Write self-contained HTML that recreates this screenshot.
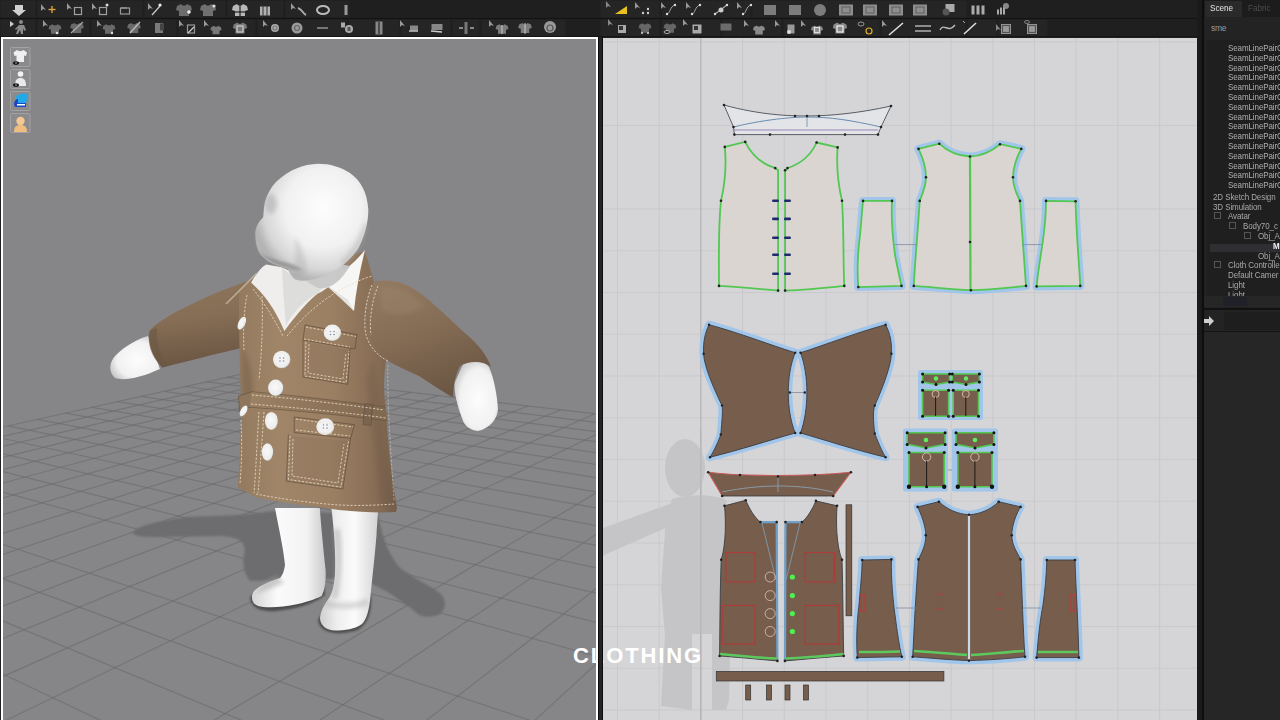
<!DOCTYPE html>
<html><head><meta charset="utf-8">
<style>
*{margin:0;padding:0;box-sizing:border-box}
html,body{width:1280px;height:720px;overflow:hidden;background:#1f1f1f;font-family:"Liberation Sans",sans-serif}
.abs{position:absolute}
#tb{left:0;top:0;width:1202px;height:37px;background:#1f1f1f}
#v3{left:1px;top:37px;width:597px;height:683px;background:#fff}
#v3in{left:2px;top:2px;width:593px;height:681px;background:#868688;overflow:hidden}
#div{left:598px;top:37px;width:5px;height:683px;background:#252525;border-left:1px solid #0c0c0c;border-right:1px solid #0c0c0c}
#v2{left:603px;top:38px;width:594px;height:682px;background:#d5d5d7;overflow:hidden}
#rp{left:1197px;top:0;width:83px;height:720px;background:#1b1b1b}
.tr{font-size:9.5px;line-height:11px;color:#b0b0b0;white-space:nowrap;letter-spacing:-0.1px;transform:scaleX(0.84);transform-origin:0 0}
#rp{overflow:hidden}

</style></head><body>
<div id="tb" class="abs"><svg width="1202" height="37" style="position:absolute;left:0;top:0"><rect x="0.5" y="0.5" width="35" height="17" fill="#252525"/><rect x="37.5" y="0.5" width="105" height="17" fill="#252525"/><rect x="144.5" y="0.5" width="81" height="17" fill="#252525"/><rect x="227.5" y="0.5" width="56" height="17" fill="#252525"/><rect x="285.5" y="0.5" width="64" height="17" fill="#252525"/><rect x="600.5" y="0.5" width="59" height="17" fill="#252525"/><rect x="661.5" y="0.5" width="89" height="17" fill="#252525"/><rect x="752.5" y="0.5" width="214" height="17" fill="#252525"/><rect x="0.5" y="19.5" width="35" height="17" fill="#252525"/><rect x="37.5" y="19.5" width="52" height="17" fill="#252525"/><rect x="91.5" y="19.5" width="85" height="17" fill="#252525"/><rect x="178.5" y="19.5" width="77" height="17" fill="#252525"/><rect x="257.5" y="19.5" width="89" height="17" fill="#252525"/><rect x="348.5" y="19.5" width="51" height="17" fill="#252525"/><rect x="401.5" y="19.5" width="49" height="17" fill="#252525"/><rect x="452.5" y="19.5" width="27" height="17" fill="#252525"/><rect x="481.5" y="19.5" width="84" height="17" fill="#252525"/><rect x="600.5" y="19.5" width="59" height="17" fill="#252525"/><rect x="661.5" y="19.5" width="59" height="17" fill="#252525"/><rect x="722.5" y="19.5" width="59" height="17" fill="#252525"/><rect x="783.5" y="19.5" width="59" height="17" fill="#252525"/><rect x="844.5" y="19.5" width="35" height="17" fill="#252525"/><rect x="881.5" y="19.5" width="84" height="17" fill="#252525"/><rect x="967.5" y="19.5" width="29" height="17" fill="#252525"/><rect x="998.5" y="19.5" width="49" height="17" fill="#252525"/><rect x="0" y="18" width="1202" height="1" fill="#131313"/><rect x="0" y="36" width="1202" height="1" fill="#151515"/><path d="M15,5 L23,5 L23,10 L26,10 L19,16 L12,10 L15,10 Z" fill="#d0d0d0"/><path d="M41,4 l0,7 l2,-2 l3,1 z" fill="#9a9a9a"/><line x1="52" y1="6" x2="52" y2="13" stroke="#e0a040" stroke-width="1.4"/><line x1="48.5" y1="9.5" x2="55.5" y2="9.5" stroke="#e0a040" stroke-width="1.4"/><path d="M67,3 l0,7 l2,-2 l3,1 z" fill="#9a9a9a"/><rect x="74.5" y="7.5" width="7" height="7" fill="none" stroke="#a0a0a0" stroke-width="1.2"/><path d="M92,3 l0,7 l2,-2 l3,1 z" fill="#9a9a9a"/><rect x="99.5" y="7.5" width="7" height="7" fill="none" stroke="#a0a0a0" stroke-width="1.2"/><circle cx="107" cy="5" r="1.5" fill="#ddd"/><rect x="120.5" y="8.0" width="9" height="6" fill="none" stroke="#999" stroke-width="1.2"/><line x1="121" y1="8" x2="127" y2="8" stroke="#999" stroke-width="1.2"/><path d="M148,3 l0,7 l2,-2 l3,1 z" fill="#9a9a9a"/><line x1="152" y1="15" x2="160" y2="6" stroke="#ccc" stroke-width="1.2"/><circle cx="160" cy="5" r="1.6" fill="#eee"/><path transform="translate(184,10) scale(1.0)" d="M-3,-6 L-7,-4 L-8,0 L-5,1 L-5,6 L5,6 L5,1 L8,0 L7,-4 L3,-6 C2,-4 -2,-4 -3,-6 Z" fill="#6c6c6c"/><circle cx="189" cy="12" r="1.8" fill="#eee"/><path transform="translate(208,10) scale(1.0)" d="M-3,-6 L-7,-4 L-8,0 L-5,1 L-5,6 L5,6 L5,1 L8,0 L7,-4 L3,-6 C2,-4 -2,-4 -3,-6 Z" fill="#707070"/><circle cx="214" cy="6" r="1.6" fill="#ddd"/><path transform="translate(240,10) scale(1.0)" d="M-3,-6 L-7,-4 L-8,0 L-5,1 L-5,6 L5,6 L5,1 L8,0 L7,-4 L3,-6 C2,-4 -2,-4 -3,-6 Z" fill="#b8b8b8"/><line x1="232" y1="12" x2="248" y2="12" stroke="#222" stroke-width="1.2"/><line x1="240" y1="5" x2="240" y2="16" stroke="#222" stroke-width="1.2"/><rect x="260.0" y="6.5" width="10" height="9" fill="#b0b0b0"/><line x1="263" y1="6" x2="263" y2="16" stroke="#333" stroke-width="1"/><line x1="267" y1="6" x2="267" y2="16" stroke="#333" stroke-width="1"/><path d="M291,3 l0,7 l2,-2 l3,1 z" fill="#9a9a9a"/><path d="M298,8 C303,10 302,13 306,15" stroke="#aaa" stroke-width="2" fill="none"/><ellipse cx="323" cy="10" rx="6" ry="4" fill="none" stroke="#bbb" stroke-width="2"/><rect x="344.5" y="5.0" width="3" height="10" fill="#999"/><path d="M615,14 L627,14 L627,6 Z" fill="#e8c020"/><path d="M606,1 l0,7 l2,-2 l3,1 z" fill="#888"/><path d="M635,2 l0,7 l2,-2 l3,1 z" fill="#9a9a9a"/><circle cx="643" cy="13" r="1.2" fill="#ccc"/><circle cx="648" cy="9" r="1.2" fill="#ccc"/><circle cx="648" cy="13" r="1.2" fill="#ccc"/><path d="M661,2 l0,7 l2,-2 l3,1 z" fill="#9a9a9a"/><path d="M667,14 C670,14 670,6 675,5" stroke="#aaa" stroke-width="1" fill="none"/><circle cx="667" cy="14" r="1.2" fill="#ddd"/><circle cx="675" cy="5" r="1.2" fill="#ddd"/><path d="M686,2 l0,7 l2,-2 l3,1 z" fill="#9a9a9a"/><path d="M692,14 C695,14 695,6 700,5" stroke="#aaa" stroke-width="1" fill="none"/><circle cx="692" cy="14" r="1.2" fill="#ddd"/><circle cx="700" cy="5" r="1.2" fill="#ddd"/><line x1="715" y1="14" x2="727" y2="5" stroke="#aaa" stroke-width="1.2"/><circle cx="721" cy="10" r="2.5" fill="#ccc"/><circle cx="715" cy="14" r="1.2" fill="#ddd"/><circle cx="727" cy="5" r="1.2" fill="#ddd"/><path d="M737,2 l0,7 l2,-2 l3,1 z" fill="#9a9a9a"/><path d="M743,14 C746,14 746,6 751,5" stroke="#aaa" stroke-width="1" fill="none"/><circle cx="743" cy="14" r="1.2" fill="#ddd"/><circle cx="751" cy="5" r="1.2" fill="#ddd"/><rect x="764.0" y="5.0" width="12" height="10" fill="#7c7c7c"/><rect x="789.0" y="5.0" width="12" height="10" fill="#7c7c7c"/><circle cx="820" cy="10" r="6" fill="#7c7c7c"/><rect x="839.0" y="4.5" width="14" height="11" fill="#8e8e8e"/><rect x="842.0" y="7.0" width="8" height="6" fill="none" stroke="#666" stroke-width="1.2"/><rect x="863.0" y="4.5" width="14" height="11" fill="#8e8e8e"/><rect x="866.0" y="7.0" width="8" height="6" fill="none" stroke="#666" stroke-width="1.2"/><rect x="889.0" y="4.5" width="14" height="11" fill="#8e8e8e"/><rect x="892.0" y="7.0" width="8" height="6" fill="none" stroke="#666" stroke-width="1.2"/><rect x="913.0" y="4.5" width="14" height="11" fill="#8e8e8e"/><rect x="916.0" y="7.0" width="8" height="6" fill="none" stroke="#666" stroke-width="1.2"/><rect x="945.5" y="4.0" width="9" height="8" fill="#aaa"/><circle cx="946" cy="12" r="3.5" fill="#555"/><rect x="971.5" y="5.5" width="3" height="9" fill="#aaa"/><rect x="976.5" y="5.5" width="3" height="9" fill="#aaa"/><rect x="981.5" y="5.5" width="3" height="9" fill="#aaa"/><rect x="997.0" y="9.5" width="2" height="5" fill="#aaa"/><rect x="1000.0" y="7.5" width="2" height="7" fill="#aaa"/><rect x="1003.0" y="5.5" width="2" height="9" fill="#aaa"/><circle cx="1006" cy="6" r="3" fill="#888"/><path d="M10,21 l0,6 l4,-3 z" fill="#ccc"/><circle cx="21" cy="22" r="2" fill="#8a8a8a"/><path d="M19,25 L24,25 L26,30 L24,31 L23,28 L23,34 L21,34 L20,30 L18,34 L16,34 L18,28 L16,30 L15,29 Z" fill="#8a8a8a"/><path d="M43,20 l0,7 l2,-2 l3,1 z" fill="#9a9a9a"/><path transform="translate(55,29) scale(0.8)" d="M-3,-6 L-7,-4 L-8,0 L-5,1 L-5,6 L5,6 L5,1 L8,0 L7,-4 L3,-6 C2,-4 -2,-4 -3,-6 Z" fill="#6a6a6a"/><circle cx="57" cy="33" r="1.2" fill="#ddd"/><path transform="translate(77,28) scale(0.85)" d="M-3,-6 L-7,-4 L-8,0 L-5,1 L-5,6 L5,6 L5,1 L8,0 L7,-4 L3,-6 C2,-4 -2,-4 -3,-6 Z" fill="#6a6a6a"/><line x1="71" y1="33" x2="83" y2="22" stroke="#aaa" stroke-width="1.2"/><path d="M97,20 l0,7 l2,-2 l3,1 z" fill="#9a9a9a"/><path transform="translate(109,29) scale(0.8)" d="M-3,-6 L-7,-4 L-8,0 L-5,1 L-5,6 L5,6 L5,1 L8,0 L7,-4 L3,-6 C2,-4 -2,-4 -3,-6 Z" fill="#6a6a6a"/><circle cx="112" cy="33" r="1.2" fill="#ddd"/><path transform="translate(134,28) scale(0.85)" d="M-3,-6 L-7,-4 L-8,0 L-5,1 L-5,6 L5,6 L5,1 L8,0 L7,-4 L3,-6 C2,-4 -2,-4 -3,-6 Z" fill="#6a6a6a"/><line x1="130" y1="33" x2="140" y2="22" stroke="#bbb" stroke-width="1.4"/><rect x="155.0" y="23.0" width="8" height="10" fill="#7a7a7a"/><rect x="160.0" y="23.5" width="4" height="7" fill="#444"/><path d="M179,20 l0,7 l2,-2 l3,1 z" fill="#9a9a9a"/><rect x="187.5" y="25.0" width="7" height="8" fill="none" stroke="#999" stroke-width="1.2"/><line x1="188" y1="33" x2="194" y2="27" stroke="#ccc" stroke-width="1.2"/><path d="M204,20 l0,7 l2,-2 l3,1 z" fill="#9a9a9a"/><path transform="translate(216,30) scale(0.7)" d="M-3,-6 L-7,-4 L-8,0 L-5,1 L-5,6 L5,6 L5,1 L8,0 L7,-4 L3,-6 C2,-4 -2,-4 -3,-6 Z" fill="#777"/><path transform="translate(240,28) scale(0.9)" d="M-3,-6 L-7,-4 L-8,0 L-5,1 L-5,6 L5,6 L5,1 L8,0 L7,-4 L3,-6 C2,-4 -2,-4 -3,-6 Z" fill="#7a7a7a"/><rect x="237.0" y="26.0" width="6" height="6" fill="none" stroke="#ccc" stroke-width="1.2"/><path d="M263,20 l0,7 l2,-2 l3,1 z" fill="#9a9a9a"/><circle cx="275" cy="28" r="4" fill="#aaa"/><circle cx="275" cy="28" r="2" fill="none" stroke="#777" stroke-width="1.2"/><circle cx="297" cy="28" r="5.5" fill="#9a9a9a"/><circle cx="297" cy="28" r="2.5" fill="none" stroke="#666" stroke-width="1.2"/><line x1="317" y1="28" x2="328" y2="28" stroke="#999" stroke-width="1.4"/><rect x="341.0" y="22.5" width="4" height="5" fill="#aaa"/><circle cx="349" cy="29" r="4" fill="#aaa"/><rect x="347.5" y="27.0" width="3" height="4" fill="#555"/><rect x="375.5" y="21.5" width="7" height="13" fill="#888"/><line x1="379" y1="22" x2="379" y2="34" stroke="#222" stroke-width="1.2"/><path d="M400,20 l0,7 l2,-2 l3,1 z" fill="#9a9a9a"/><rect x="410.0" y="25.5" width="8" height="5" fill="#888"/><line x1="409" y1="31" x2="418" y2="31" stroke="#ccc" stroke-width="1.4"/><rect x="431.5" y="24.0" width="11" height="6" fill="#888"/><line x1="431" y1="31" x2="442" y2="32" stroke="#ccc" stroke-width="1.4"/><line x1="459" y1="28" x2="463" y2="28" stroke="#ccc" stroke-width="1.2"/><line x1="470" y1="28" x2="474" y2="28" stroke="#ccc" stroke-width="1.2"/><rect x="464.5" y="22.0" width="3" height="12" fill="#777"/><path d="M489,20 l0,7 l2,-2 l3,1 z" fill="#9a9a9a"/><path transform="translate(502,29) scale(0.8)" d="M-3,-6 L-7,-4 L-8,0 L-5,1 L-5,6 L5,6 L5,1 L8,0 L7,-4 L3,-6 C2,-4 -2,-4 -3,-6 Z" fill="#7c7c7c"/><line x1="502" y1="25" x2="502" y2="34" stroke="#ccc" stroke-width="1"/><path transform="translate(525,28) scale(0.85)" d="M-3,-6 L-7,-4 L-8,0 L-5,1 L-5,6 L5,6 L5,1 L8,0 L7,-4 L3,-6 C2,-4 -2,-4 -3,-6 Z" fill="#7c7c7c"/><line x1="525" y1="23" x2="525" y2="34" stroke="#ccc" stroke-width="1"/><circle cx="550" cy="27" r="6" fill="#9a9a9a"/><circle cx="550" cy="28" r="3" fill="none" stroke="#555" stroke-width="1.2"/><path d="M608,19 l0,7 l2,-2 l3,1 z" fill="#888"/><rect x="618.0" y="25.0" width="8" height="8" fill="#aaa"/><rect x="619.0" y="26.0" width="4" height="4" fill="#333"/><path transform="translate(645,28) scale(0.8)" d="M-3,-6 L-7,-4 L-8,0 L-5,1 L-5,6 L5,6 L5,1 L8,0 L7,-4 L3,-6 C2,-4 -2,-4 -3,-6 Z" fill="#666"/><circle cx="642" cy="33" r="1" fill="#ddd"/><circle cx="648" cy="33" r="1" fill="#ddd"/><path transform="translate(670,28) scale(0.8)" d="M-3,-6 L-7,-4 L-8,0 L-5,1 L-5,6 L5,6 L5,1 L8,0 L7,-4 L3,-6 C2,-4 -2,-4 -3,-6 Z" fill="#666"/><ellipse cx="667" cy="32" rx="3" ry="1.5" fill="#222" stroke="#ccc" stroke-width="0.8"/><path d="M683,19 l0,7 l2,-2 l3,1 z" fill="#999"/><rect x="692.5" y="24.5" width="9" height="9" fill="#aaa"/><rect x="694.0" y="26.0" width="4" height="4" fill="#333"/><rect x="720.5" y="23.5" width="11" height="7" fill="#6c6c6c"/><path d="M744,20 l0,7 l2,-2 l3,1 z" fill="#9a9a9a"/><path transform="translate(759,30) scale(0.75)" d="M-3,-6 L-7,-4 L-8,0 L-5,1 L-5,6 L5,6 L5,1 L8,0 L7,-4 L3,-6 C2,-4 -2,-4 -3,-6 Z" fill="#8a8a8a"/><path d="M775,20 l0,7 l2,-2 l3,1 z" fill="#9a9a9a"/><rect x="787.5" y="24.5" width="7" height="9" fill="#999"/><circle cx="789" cy="32" r="2" fill="#ddd"/><path d="M801,20 l0,7 l2,-2 l3,1 z" fill="#9a9a9a"/><path transform="translate(817,30) scale(0.75)" d="M-3,-6 L-7,-4 L-8,0 L-5,1 L-5,6 L5,6 L5,1 L8,0 L7,-4 L3,-6 C2,-4 -2,-4 -3,-6 Z" fill="#8a8a8a"/><rect x="814.5" y="27.5" width="5" height="5" fill="none" stroke="#ddd" stroke-width="1.2"/><path transform="translate(840,28) scale(0.9)" d="M-3,-6 L-7,-4 L-8,0 L-5,1 L-5,6 L5,6 L5,1 L8,0 L7,-4 L3,-6 C2,-4 -2,-4 -3,-6 Z" fill="#8a8a8a"/><rect x="837.0" y="26.0" width="6" height="6" fill="none" stroke="#eee" stroke-width="1.2"/><ellipse cx="861" cy="24" rx="3" ry="2" fill="none" stroke="#999" stroke-width="1"/><circle cx="869" cy="31" r="3" fill="none" stroke="#e0b020" stroke-width="1.2"/><path d="M882,20 l0,7 l2,-2 l3,1 z" fill="#9a9a9a"/><line x1="889" y1="35" x2="903" y2="23" stroke="#ddd" stroke-width="1.6"/><line x1="915" y1="26" x2="931" y2="26" stroke="#bbb" stroke-width="1.4"/><line x1="915" y1="31" x2="931" y2="31" stroke="#bbb" stroke-width="1.4"/><path d="M940,30 C944,22 948,34 955,25" stroke="#bbb" stroke-width="1.4" fill="none"/><path d="M963,21 l2,2" stroke="#aaa"/><line x1="964" y1="34" x2="976" y2="23" stroke="#ddd" stroke-width="1.6"/><path d="M996,24 l0,7 l2,-2 l3,1 z" fill="#888"/><rect x="1001.0" y="24.0" width="10" height="10" fill="#9a9a9a"/><rect x="1002.5" y="25.5" width="7" height="7" fill="none" stroke="#555" stroke-width="1.2"/><ellipse cx="1027" cy="22" rx="2.5" ry="1.5" fill="none" stroke="#999" stroke-width="0.8"/><rect x="1027.0" y="24.0" width="10" height="10" fill="#9a9a9a"/><rect x="1028.5" y="25.5" width="7" height="7" fill="none" stroke="#555" stroke-width="1.2"/></svg></div>
<div id="v3" class="abs"><div id="v3in" class="abs">
<svg width="593" height="681" viewBox="3 39 593 681" style="position:absolute;left:0;top:0">
<g stroke="#6a6a6c" stroke-width="1.2" stroke-opacity="0.62" fill="none"><line x1="-49.4" y1="438.6" x2="246.1" y2="373.2"/>
<line x1="-48.9" y1="448.2" x2="267.1" y2="375.6"/>
<line x1="-48.4" y1="458.6" x2="288.9" y2="378.1"/>
<line x1="-47.8" y1="470.1" x2="311.5" y2="380.8"/>
<line x1="-47.2" y1="482.6" x2="334.9" y2="383.5"/>
<line x1="-49.7" y1="497.3" x2="359.3" y2="386.3"/>
<line x1="-49.1" y1="512.8" x2="384.7" y2="389.3"/>
<line x1="-48.5" y1="530.0" x2="411.0" y2="392.4"/>
<line x1="-47.7" y1="549.3" x2="438.5" y2="395.6"/>
<line x1="-46.9" y1="571.1" x2="467.1" y2="398.9"/>
<line x1="-46.0" y1="595.9" x2="497.0" y2="402.4"/>
<line x1="-49.5" y1="626.2" x2="528.2" y2="406.0"/>
<line x1="-48.6" y1="659.6" x2="560.8" y2="409.8"/>
<line x1="-47.5" y1="698.9" x2="594.9" y2="413.8"/>
<line x1="-46.3" y1="745.7" x2="630.6" y2="417.9"/>
<line x1="-42.9" y1="873.0" x2="699.7" y2="431.4"/>
<line x1="-48.8" y1="968.2" x2="699.9" y2="464.5"/>
<line x1="67.1" y1="999.2" x2="698.8" y2="509.1"/>
<line x1="235.9" y1="994.8" x2="698.8" y2="569.8"/>
<line x1="399.5" y1="996.5" x2="698.8" y2="659.0"/>
<line x1="565.8" y1="998.2" x2="698.8" y2="803.2"/>
<line x1="-46.8" y1="928.9" x2="39.8" y2="997.7"/>
<line x1="-48.7" y1="802.3" x2="250.0" y2="996.7"/>
<line x1="-46.7" y1="715.7" x2="462.9" y2="995.6"/>
<line x1="-48.2" y1="649.8" x2="688.9" y2="999.4"/>
<line x1="-49.3" y1="599.2" x2="691.9" y2="908.0"/>
<line x1="-47.8" y1="559.9" x2="694.3" y2="835.1"/>
<line x1="-48.8" y1="527.2" x2="696.3" y2="775.7"/>
<line x1="-48.4" y1="477.8" x2="699.4" y2="684.6"/>
<line x1="-49.1" y1="458.3" x2="694.7" y2="647.4"/>
<line x1="-49.7" y1="441.5" x2="696.1" y2="616.7"/>
<line x1="-23.1" y1="432.8" x2="697.4" y2="589.9"/>
<line x1="8.0" y1="425.9" x2="698.5" y2="566.3"/>
<line x1="37.5" y1="419.3" x2="699.4" y2="545.3"/>
<line x1="65.4" y1="413.2" x2="696.0" y2="525.8"/>
<line x1="91.9" y1="407.3" x2="697.0" y2="508.9"/>
<line x1="117.2" y1="401.7" x2="697.9" y2="493.7"/>
<line x1="141.2" y1="396.4" x2="698.7" y2="479.9"/>
<line x1="164.2" y1="391.3" x2="699.5" y2="467.3"/>
<line x1="186.0" y1="386.5" x2="696.8" y2="455.3"/>
<line x1="206.9" y1="381.8" x2="697.6" y2="444.7"/>
<line x1="226.9" y1="377.4" x2="698.3" y2="434.9"/>
<line x1="246.1" y1="373.2" x2="698.9" y2="425.9"/></g>
<defs>
<radialGradient id="gHead" cx="0.6" cy="0.38" r="0.62">
<stop offset="0" stop-color="#fdfdfd"/><stop offset="0.55" stop-color="#f1f1f1"/><stop offset="0.85" stop-color="#d6d6d6"/><stop offset="1" stop-color="#b4b4b4"/>
</radialGradient>
<radialGradient id="gSnout" cx="0.45" cy="0.45" r="0.6">
<stop offset="0" stop-color="#fafafa"/><stop offset="0.7" stop-color="#eaeaea"/><stop offset="1" stop-color="#c2c2c2"/>
</radialGradient>
<linearGradient id="gLegL" x1="0" y1="0" x2="1" y2="0">
<stop offset="0" stop-color="#d4d4d4"/><stop offset="0.35" stop-color="#fbfbfb"/><stop offset="0.75" stop-color="#f2f2f2"/><stop offset="1" stop-color="#c9c9c9"/>
</linearGradient>
<linearGradient id="gLegR" x1="0" y1="0" x2="1" y2="0">
<stop offset="0" stop-color="#cfcfcf"/><stop offset="0.3" stop-color="#efefef"/><stop offset="0.6" stop-color="#fbfbfb"/><stop offset="1" stop-color="#d2d2d2"/>
</linearGradient>
<radialGradient id="gHand" cx="0.55" cy="0.55" r="0.6">
<stop offset="0" stop-color="#fdfdfd"/><stop offset="0.7" stop-color="#f1f1f1"/><stop offset="1" stop-color="#c8c8c8"/>
</radialGradient>
<linearGradient id="gCoat" x1="0" y1="0" x2="1" y2="0">
<stop offset="0" stop-color="#937a5e"/><stop offset="0.25" stop-color="#a08568"/><stop offset="0.6" stop-color="#9a7f62"/><stop offset="0.88" stop-color="#866c55"/><stop offset="1" stop-color="#735d49"/>
</linearGradient>
<linearGradient id="gSleeveL" x1="0" y1="0" x2="0.15" y2="1">
<stop offset="0" stop-color="#8f775e"/><stop offset="0.5" stop-color="#866d55"/><stop offset="1" stop-color="#6c5744"/>
</linearGradient>
<linearGradient id="gSleeveR" x1="0.2" y1="0" x2="0.6" y2="1">
<stop offset="0" stop-color="#927a62"/><stop offset="0.45" stop-color="#856c55"/><stop offset="1" stop-color="#6a5643"/>
</linearGradient>
<linearGradient id="gBelt" x1="0" y1="0" x2="1" y2="0">
<stop offset="0" stop-color="#9c8264"/><stop offset="1" stop-color="#806850"/>
</linearGradient>
<radialGradient id="gBtn" cx="0.45" cy="0.45" r="0.6">
<stop offset="0" stop-color="#fafafa"/><stop offset="0.8" stop-color="#ececec"/><stop offset="1" stop-color="#b8b8b8"/>
</radialGradient>
<filter id="blur1" x="-20%" y="-20%" width="140%" height="140%"><feGaussianBlur stdDeviation="0.8"/></filter>
<filter id="blur2" x="-20%" y="-20%" width="140%" height="140%"><feGaussianBlur stdDeviation="2"/></filter>
</defs>
<!-- shadow -->
<path fill="#6d6d6f" filter="url(#blur1)" d="M133,533 C136,527 148,523 186,517 L240,515 L274,511 L378,514 C381,532 386,550 399,567 C412,578 430,585 441,594 C447,601 446,611 438,615 C430,618 422,617 418,614 C408,606 396,597 384,590 L360,578 L250,581 C243,572 242,560 245,551 C244,541 240,538 222,536 L160,537 C145,537 135,537 133,533 Z"/>
<!-- legs -->
<path fill="#4e4e4e" filter="url(#blur1)" d="M250,597 C251,609 262,612 276,611 C296,609 314,604 325,595 L324,585 L268,584 Z"/>
<path fill="#4e4e4e" filter="url(#blur1)" d="M318,620 C319,634 340,636 358,630 C369,623 372,610 371,595 L330,598 Z"/>
<path fill="url(#gLegL)" d="M275,508 C278,525 283,545 285,565 C284,572 282,576 280,578 C268,582 259,586 254,591 C250,597 252,604 258,606 C265,608 280,608 298,604 C310,601 318,598 321.7,596 C325,590 326,580 325.6,570 C323,545 321,525 319.8,508 Z"/>
<path fill="url(#gLegR)" d="M331.4,508 C334,530 336,555 335,575 C334,585 333,592 329,598 C324,605 320,612 320,619 C321,626 326,630 335,630.5 C345,630.5 355,629 362,624 C367,619 369,610 370.4,597 C372,580 375,555 376.5,535 C377,525 378,515 378.1,508 Z"/>
<path fill="#9c9c9c" opacity="0.5" filter="url(#blur2)" d="M276,575 C268,580 260,586 256,593 C262,592 272,588 284,583 Z"/>
<path fill="#a4a4a4" opacity="0.45" filter="url(#blur2)" d="M333,530 C337,555 336,580 331,598 L338,598 C342,575 343,550 340,528 Z"/>
<path fill="#a8a8a8" opacity="0.4" filter="url(#blur2)" d="M325,600 C335,604 355,604 368,598 L368,606 C355,610 335,610 324,606 Z"/>
<!-- left sleeve & hand -->
<path fill="url(#gHand)" d="M148,336 C138,339 126,345 116,355 C109,362 108,372 115,378 C124,381 140,378 160,369 Z"/>
<path fill="url(#gSleeveL)" d="M257,277 C240,284 215,292 190,305 C175,312 160,320 149.7,330.4 C148,340 150,355 162.3,367.4 C185,362 215,354 242,348 L252,300 Z"/>
<path fill="#6a5643" opacity="0.6" d="M149.7,330.4 C147,342 150,356 162.3,367.4 L168,366 C160,355 156,342 157,328 Z"/>
<!-- right sleeve & hand -->
<path fill="url(#gHand)" d="M464,362 C472,358 484,360 489,367 C494,378 497,395 498,409 C497,420 490,428 478,431 C470,430 464,426 462,418 C457,405 454,392 454.5,383 Z"/>
<path fill="url(#gSleeveR)" d="M374,281.8 C385,279 400,280 414,289 C428,298 440,310 466,334 C478,344 487,355 491,367 C484,361 470,360 460,366 C455,375 453,388 453.3,397.6 C440,390 425,380 419,376 C405,370 395,365 386,359.8 C375,352 366,335 365,317 C366,300 370,290 374,281.8 Z"/>
<path fill="#a08870" opacity="0.35" filter="url(#blur2)" d="M380,288 C395,285 410,292 425,305 C415,315 395,318 382,310 Z"/>
<!-- coat body -->
<path fill="url(#gCoat)" d="M239,290 L257,277 L300,270 L365,251 L374,281.8 C368,295 364,310 365,317 C366,335 375,352 386,359.8 C384,375 383,388 385.6,407 C388,440 390,470 397,508 L396,512 C380,513 360,512 339,510 C320,507 300,505 288,503 C275,501 262,499 255,497 L237.8,487 C239,470 240,445 241.7,409 C240,380 239,340 239,290 Z"/>
<!-- darker shading on coat right side and under arms -->
<path fill="#5e4c3c" opacity="0.2" filter="url(#blur2)" d="M372,360 C380,380 382,420 386,460 L394,505 L380,505 C376,470 372,420 366,380 Z"/>
<path fill="#5e4c3c" opacity="0.3" filter="url(#blur2)" d="M242,348 C250,360 255,380 252,400 L243,404 Z"/>
<!-- belt -->
<path fill="#8e765c" stroke="#5f4d3d" stroke-width="0.6" d="M238.5,396 L252,391.7 L250,407.2 L239.5,411 Z"/>
<path fill="url(#gBelt)" d="M251.4,391.7 C300,396 350,402 385.6,407.2 L387.6,420.9 C350,416 300,411 249.5,407.2 Z"/>
<path fill="none" stroke="#5f4d3d" stroke-width="0.8" opacity="0.7" d="M251.4,391.7 C300,396 350,402 385.6,407.2 M249.5,407.2 C300,411 350,416 387.6,420.9"/>
<rect x="364" y="404" width="8" height="21" fill="#7a6450" stroke="#5f4d3d" stroke-width="0.6" transform="rotate(5 368 414)"/>
<!-- pockets -->
<g fill="none" stroke="#5f4d3d" stroke-width="0.9" opacity="0.75">
<path d="M305,325 L357,334.7 L355,349 L303,340 Z"/>
<path d="M303,340 L303,377 L347.8,384.3 L350,349"/>
<path d="M294.2,417 L354.5,424.7 L350.6,438.4 L294.2,432.5 Z"/>
<path d="M288.4,434.5 L286.4,481.2 L342.8,489 L350.6,438.4"/>
</g>
<g fill="#6d5845" opacity="0.12">
<path d="M306,342 L348,350 L346,382 L305,376 Z"/>
<path d="M290,436 L349,441 L341,487 L288,480 Z"/>
</g>
<!-- shirt -->
<path fill="#efeeec" d="M251.1,282.5 C256,274 262,266 266.4,264.4 L281.7,267.2 C300,276 315,280 335,276 L340,279 C330,286 322,292 317.8,293.6 C310,300 300,310 284.4,331.1 C278,316 270,300 251.1,282.5 Z"/>
<path fill="#d8d8d8" opacity="0.8" d="M282,268 C295,278 310,285 330,280 L318,293 C305,300 295,310 286,325 C284,305 283,285 282,268 Z"/>
<!-- collar right -->
<path fill="#f6f6f5" d="M365,250 C355,262 345,272 323,282.5 L340,297.8 L354,311 C356,290 360,270 365,250 Z"/>
<path fill="#cfcfcf" opacity="0.5" d="M323,282.5 L340,297.8 L354,311 L348,300 Z"/>
<!-- lapel light edge (left) -->
<path fill="none" stroke="#c8b8a0" stroke-width="1.6" opacity="0.8" d="M226,304 L257,273"/>
<!-- head -->
<path fill="#c9c9c9" d="M285,262 C295,272 305,282 318,288 C330,290 340,282 350,266 L330,262 Z"/>
<path fill="url(#gHead)" d="M318,163.7 C303,164 289,170 277,181 C269,189 265,199 264,208 C263.5,212 263.5,215 263,217.4 C258,222 255,228 255.3,235 C255.5,243 257,249 260,254 C264,259 271,264 279,266.2 C283,267.5 286,268.5 288,269 C289,272 291,276 295,279.4 C300,281 305,281 309,280 C325,278 345,268 358,249 C365,236 368.5,222 368.3,209 C367,192 361,181 350,173 C341,167 330,163.7 318,163.7 Z"/>
<ellipse cx="271" cy="204" rx="6" ry="10" fill="#a0a0a0" opacity="0.45" filter="url(#blur2)"/>
<path fill="#7e7e7e" opacity="0.55" filter="url(#blur1)" d="M260,252 C266,260 276,265 288,268 C292,270 296,271 302,270 C298,266 290,263 280,261 C272,259 265,256 260,252 Z"/>
<path fill="#a0a0a0" opacity="0.3" filter="url(#blur2)" d="M294,236 C303,248 308,262 306,276 L292,276 C296,262 296,250 294,236 Z"/>
<path fill="#b4b4b4" opacity="0.35" filter="url(#blur2)" d="M257,228 C256,238 257,248 262,254 L266,250 C262,244 261,236 262,228 Z"/>
<path fill="#a6a6a6" opacity="0.35" filter="url(#blur2)" d="M340,262 C350,252 360,238 364,222 L368,225 C365,242 356,258 345,268 Z"/>
<!-- buttons -->
<g fill="url(#gBtn)">
<ellipse cx="332.4" cy="332.8" rx="8.7" ry="8.2"/>
<ellipse cx="281.7" cy="359.5" rx="8.7" ry="8.7"/>
<ellipse cx="275.7" cy="387.8" rx="7.6" ry="8.2"/>
<ellipse cx="271.4" cy="420.9" rx="6.5" ry="9"/>
<ellipse cx="267.5" cy="452" rx="5.7" ry="8.8"/>
<ellipse cx="325.3" cy="426.7" rx="9" ry="8.5"/>
<ellipse cx="241.8" cy="323.2" rx="3.5" ry="7" transform="rotate(25 241.8 323.2)"/>
<ellipse cx="243.6" cy="411" rx="3" ry="6" transform="rotate(30 243.6 411)"/>
</g>
<g fill="#7a8aa0"><circle cx="330.5" cy="331.5" r="0.8"/><circle cx="334" cy="331.5" r="0.8"/><circle cx="330.5" cy="334.5" r="0.8"/><circle cx="334" cy="334.5" r="0.8"/>
<circle cx="280" cy="358" r="0.8"/><circle cx="283.5" cy="358" r="0.8"/><circle cx="280" cy="361" r="0.8"/><circle cx="283.5" cy="361" r="0.8"/>
<circle cx="323.5" cy="425" r="0.8"/><circle cx="327" cy="425" r="0.8"/><circle cx="323.5" cy="428" r="0.8"/><circle cx="327" cy="428" r="0.8"/></g>
<!-- stitching -->
<g fill="none" stroke="#eadcc6" stroke-width="0.9" stroke-dasharray="2.2 1.6" opacity="0.9">
<path d="M253,289 C262,300 272,315 283,336"/>
<path d="M287,336 C300,320 320,300 346,287 C355,282 365,278 372,276"/>
<path d="M262,296 C263,320 262,350 259,380"/>
<path d="M372,285 C366,300 363,320 366,335 C370,348 378,356 388,361"/>
<path d="M378,286 C372,300 369,320 371,335"/>
<path d="M306,327 L356,336.5 M304,339 L350,347"/>
<path d="M306,342 L305,376 L346,382.5 L349,351 M309,344 L308,373 L343,379 L346,353"/>
<path d="M252,395 C300,399 350,405 384,410 M251,404 C300,408 350,413 386,418"/>
<path d="M296,419 L353,427 M296,430 L350,436"/>
<path d="M290,436 L288.5,479.5 L341,487 L348.5,441 M293,439 L292,476 L338,483 L344,444"/>
<path d="M259,412 C257,440 256,470 254,493 M264,412 C262,440 260,470 258,493"/>
<path d="M241,420 C242,440 242,460 240,484"/>
<path d="M256,494 C280,499 320,504 340,505 C360,506 380,505 394,504"/>
<path d="M388,365 C387,400 390,440 394,500" opacity="0.6"/>
<path d="M247,295 C244,310 243,330 244,350"/>
</g>

</svg>
<svg class="abs" style="left:0;top:0" width="40" height="100" viewBox="3 39 40 100">
<g fill="#8b8b8d" stroke="#a2a2a4" stroke-width="1">
<rect x="10.5" y="47.5" width="19.5" height="19" rx="1"/>
<rect x="10.5" y="69.5" width="19.5" height="19" rx="1"/>
<rect x="10.5" y="91.5" width="19.5" height="19" rx="1"/>
<rect x="10.5" y="113.5" width="19.5" height="19" rx="1"/>
</g>
<path d="M17,50 L13.5,52.5 L14.5,56 L16.5,55.5 L16.5,62 L24,62 L24,55.5 L26,56 L27,52.5 L23.5,50 C22,51.5 18.5,51.5 17,50 Z" fill="#f0f0f0"/>
<ellipse cx="16" cy="63" rx="3" ry="1.8" fill="#111"/><circle cx="16" cy="63" r="0.8" fill="#ccc"/>
<circle cx="20.5" cy="74" r="2.8" fill="#f2f2f2"/><path d="M15,86 C15,80 17,78 20.5,78 C24,78 26,80 26,86 Z" fill="#eaeaea"/>
<ellipse cx="16" cy="85" rx="3" ry="1.8" fill="#111"/><circle cx="16" cy="85" r="0.8" fill="#ccc"/>
<path d="M16,96 C20,93 25,93 28,94 L26,104 L17,105 Z" fill="#20a8e8"/>
<path d="M14,104 C14,101 16,99 18,99 L18,103 L26,103 L26,107 L16,107 C15,107 14,106 14,104 Z" fill="#1848c8"/>
<rect x="17" y="104" width="8" height="1.5" fill="#fff"/>
<circle cx="20.5" cy="121" r="4.2" fill="#f4c890"/><path d="M14,132 C14,127 16,125 20.5,125 C25,125 27,127 27,132 Z" fill="#f0bc80"/>
</svg>

</div></div>
<div id="v2" class="abs">
<svg width="594" height="682" viewBox="603 38 594 682" style="position:absolute;left:0;top:0">
<g stroke="#cacacd" stroke-width="1.1" fill="none"><line x1="617.5" y1="38" x2="617.5" y2="720"/>
<line x1="659.2" y1="38" x2="659.2" y2="720"/>
<line x1="700.9" y1="38" x2="700.9" y2="720"/>
<line x1="742.6" y1="38" x2="742.6" y2="720"/>
<line x1="784.3" y1="38" x2="784.3" y2="720"/>
<line x1="826.0" y1="38" x2="826.0" y2="720"/>
<line x1="867.7" y1="38" x2="867.7" y2="720"/>
<line x1="909.4" y1="38" x2="909.4" y2="720"/>
<line x1="951.1" y1="38" x2="951.1" y2="720"/>
<line x1="992.8" y1="38" x2="992.8" y2="720"/>
<line x1="1034.5" y1="38" x2="1034.5" y2="720"/>
<line x1="1076.2" y1="38" x2="1076.2" y2="720"/>
<line x1="1117.9" y1="38" x2="1117.9" y2="720"/>
<line x1="1159.6" y1="38" x2="1159.6" y2="720"/>
<line x1="603" y1="42.0" x2="1197" y2="42.0"/>
<line x1="603" y1="125.5" x2="1197" y2="125.5"/>
<line x1="603" y1="209.0" x2="1197" y2="209.0"/>
<line x1="603" y1="250.8" x2="1197" y2="250.8"/>
<line x1="603" y1="292.5" x2="1197" y2="292.5"/>
<line x1="603" y1="334.2" x2="1197" y2="334.2"/>
<line x1="603" y1="376.0" x2="1197" y2="376.0"/>
<line x1="603" y1="417.8" x2="1197" y2="417.8"/>
<line x1="603" y1="459.5" x2="1197" y2="459.5"/>
<line x1="603" y1="501.2" x2="1197" y2="501.2"/>
<line x1="603" y1="543.0" x2="1197" y2="543.0"/>
<line x1="603" y1="584.8" x2="1197" y2="584.8"/>
<line x1="603" y1="626.5" x2="1197" y2="626.5"/>
<line x1="603" y1="668.2" x2="1197" y2="668.2"/>
<line x1="603" y1="710.0" x2="1197" y2="710.0"/>
<line x1="700.8" y1="38" x2="700.8" y2="720" stroke="#b4b4b7"/></g>
<g fill="#c5c5c7">
<ellipse cx="685" cy="468" rx="20" ry="29"/>
<path d="M672,499 C690,494 712,494 726,500 L731,600 L729,700 L726,710 L712,710 L712,634 L692,634 L692,710 L661,706 L665,636 L661,587 L665.5,524 Z"/>
<path d="M603,528 L678,501 L688,522 L665.5,528 L603,555.4 Z"/>
</g>
<line x1="700.8" y1="430" x2="700.8" y2="720" stroke="#b4b4b7" stroke-width="1.1"/>
<path fill="#e2e4e8" stroke="#4a4e54" stroke-width="0.9" d="M724,105 C760,115 790,116 807,116 C830,116 860,113 891,106 L881,127 L878,134.6 L734.4,134.6 L733.5,127 Z"/>
<path fill="none" stroke="#6a8cb0" stroke-width="1" d="M733.5,127 C770,118 800,117 807,117 C830,117 850,120 881,127"/>
<line x1="734" y1="130" x2="878" y2="130" stroke="#9a86b8" stroke-width="1"/>
<line x1="807" y1="116" x2="807" y2="127" stroke="#6a8cb0" stroke-width="0.8"/>
<circle cx="724" cy="105" r="1.3" fill="#222"/>
<circle cx="891" cy="106" r="1.3" fill="#222"/>
<circle cx="733.5" cy="127" r="1.3" fill="#222"/>
<circle cx="881" cy="127" r="1.3" fill="#222"/>
<circle cx="734.4" cy="134.6" r="1.3" fill="#222"/>
<circle cx="878" cy="134.6" r="1.3" fill="#222"/>
<circle cx="807" cy="116" r="1.3" fill="#222"/>
<circle cx="795" cy="116" r="1.3" fill="#222"/>
<circle cx="819" cy="116" r="1.3" fill="#222"/>
<circle cx="770" cy="134.6" r="1.3" fill="#222"/>
<circle cx="845" cy="134.6" r="1.3" fill="#222"/>
<path d="M724.8,146.9 L745.2,141.9 C752,156 762,164 775.2,168.1 L778.1,170.2 L778.1,290.6 C760,289 740,287 719,285.9 C719,260 718,230 721,200.8 C724,188 727,170 724.8,146.9 Z" fill="#dad5d1"/>
<path d="M724.8,146.9 L745.2,141.9 C752,156 762,164 775.2,168.1 L778.1,170.2 L778.1,290.6 C760,289 740,287 719,285.9 C719,260 718,230 721,200.8 C724,188 727,170 724.8,146.9 Z" fill="none" stroke="#52c852" stroke-width="1.8" stroke-linejoin="round"/>
<path d="M785.1,170.2 L787.5,168.1 C800,164 811,155 816.6,142.5 L837.6,147.4 C836,170 839,188 842,200.8 C844,230 843,260 844.3,285.9 C825,288 805,290 785.1,290.6 Z" fill="#dad5d1"/>
<path d="M785.1,170.2 L787.5,168.1 C800,164 811,155 816.6,142.5 L837.6,147.4 C836,170 839,188 842,200.8 C844,230 843,260 844.3,285.9 C825,288 805,290 785.1,290.6 Z" fill="none" stroke="#52c852" stroke-width="1.8" stroke-linejoin="round"/>
<circle cx="724.8" cy="146.9" r="1.3" fill="#222"/>
<circle cx="745.2" cy="141.9" r="1.3" fill="#222"/>
<circle cx="775.2" cy="168.1" r="1.3" fill="#222"/>
<circle cx="778.1" cy="290.6" r="1.3" fill="#222"/>
<circle cx="719" cy="285.9" r="1.3" fill="#222"/>
<circle cx="721" cy="200.8" r="1.3" fill="#222"/>
<circle cx="785.1" cy="170.2" r="1.3" fill="#222"/>
<circle cx="787.5" cy="168.1" r="1.3" fill="#222"/>
<circle cx="816.6" cy="142.5" r="1.3" fill="#222"/>
<circle cx="837.6" cy="147.4" r="1.3" fill="#222"/>
<circle cx="842" cy="200.8" r="1.3" fill="#222"/>
<circle cx="844.3" cy="285.9" r="1.3" fill="#222"/>
<circle cx="785.1" cy="290.6" r="1.3" fill="#222"/>
<rect x="772" y="199.5" width="7" height="2.6" rx="1.3" fill="#1e2a6e"/><rect x="784" y="199.5" width="7" height="2.6" rx="1.3" fill="#1e2a6e"/>
<rect x="772" y="217.6" width="7" height="2.6" rx="1.3" fill="#1e2a6e"/><rect x="784" y="217.6" width="7" height="2.6" rx="1.3" fill="#1e2a6e"/>
<rect x="772" y="236.5" width="7" height="2.6" rx="1.3" fill="#1e2a6e"/><rect x="784" y="236.5" width="7" height="2.6" rx="1.3" fill="#1e2a6e"/>
<rect x="772" y="253.39999999999998" width="7" height="2.6" rx="1.3" fill="#1e2a6e"/><rect x="784" y="253.39999999999998" width="7" height="2.6" rx="1.3" fill="#1e2a6e"/>
<rect x="772" y="272.4" width="7" height="2.6" rx="1.3" fill="#1e2a6e"/><rect x="784" y="272.4" width="7" height="2.6" rx="1.3" fill="#1e2a6e"/>
<path d="M863,200.9 L892,200.9 C891,220 893,240 895,255 C897,265 899,275 901.5,285.9 L858.3,287.1 C857,270 858,250 860,235 C861,225 862,212 863,200.9 Z" fill="#a2c6ea" stroke="#a2c6ea" stroke-width="8" stroke-linejoin="round"/>
<path d="M863,200.9 L892,200.9 C891,220 893,240 895,255 C897,265 899,275 901.5,285.9 L858.3,287.1 C857,270 858,250 860,235 C861,225 862,212 863,200.9 Z" fill="#dad5d1"/>
<path d="M863,200.9 L892,200.9 C891,220 893,240 895,255 C897,265 899,275 901.5,285.9 L858.3,287.1 C857,270 858,250 860,235 C861,225 862,212 863,200.9 Z" fill="none" stroke="#52c852" stroke-width="1.8" stroke-linejoin="round"/>
<path d="M918.5,148.9 L939.3,143.7 C948,152 958,156 970,156.5 C982,156 992,151 1000,144.2 L1021.3,148.9 C1017,156 1013,168 1013,177.2 C1013,186 1017,195 1020,200.9 C1022,230 1024,260 1026,285.9 C1005,288 990,290 970.9,290.2 C950,289 930,287 913.8,285.9 C915,260 918,230 919.7,200.9 C922,195 926,186 926,177.2 C926,168 922,156 918.5,148.9 Z" fill="#a2c6ea" stroke="#a2c6ea" stroke-width="8" stroke-linejoin="round"/>
<path d="M918.5,148.9 L939.3,143.7 C948,152 958,156 970,156.5 C982,156 992,151 1000,144.2 L1021.3,148.9 C1017,156 1013,168 1013,177.2 C1013,186 1017,195 1020,200.9 C1022,230 1024,260 1026,285.9 C1005,288 990,290 970.9,290.2 C950,289 930,287 913.8,285.9 C915,260 918,230 919.7,200.9 C922,195 926,186 926,177.2 C926,168 922,156 918.5,148.9 Z" fill="#dad5d1"/>
<path d="M918.5,148.9 L939.3,143.7 C948,152 958,156 970,156.5 C982,156 992,151 1000,144.2 L1021.3,148.9 C1017,156 1013,168 1013,177.2 C1013,186 1017,195 1020,200.9 C1022,230 1024,260 1026,285.9 C1005,288 990,290 970.9,290.2 C950,289 930,287 913.8,285.9 C915,260 918,230 919.7,200.9 C922,195 926,186 926,177.2 C926,168 922,156 918.5,148.9 Z" fill="none" stroke="#52c852" stroke-width="1.8" stroke-linejoin="round"/>
<path d="M1046,200.9 L1075.6,201.3 C1076,230 1079,262 1080.3,285.9 L1036.6,286.4 C1038,270 1041,255 1043,240 C1045,225 1046,212 1046,200.9 Z" fill="#a2c6ea" stroke="#a2c6ea" stroke-width="8" stroke-linejoin="round"/>
<path d="M1046,200.9 L1075.6,201.3 C1076,230 1079,262 1080.3,285.9 L1036.6,286.4 C1038,270 1041,255 1043,240 C1045,225 1046,212 1046,200.9 Z" fill="#dad5d1"/>
<path d="M1046,200.9 L1075.6,201.3 C1076,230 1079,262 1080.3,285.9 L1036.6,286.4 C1038,270 1041,255 1043,240 C1045,225 1046,212 1046,200.9 Z" fill="none" stroke="#52c852" stroke-width="1.8" stroke-linejoin="round"/>
<line x1="970" y1="156.5" x2="970.5" y2="290" stroke="#52c852" stroke-width="2.2"/>
<circle cx="863" cy="200.9" r="1.3" fill="#222"/>
<circle cx="892" cy="200.9" r="1.3" fill="#222"/>
<circle cx="901.5" cy="285.9" r="1.3" fill="#222"/>
<circle cx="858.3" cy="287.1" r="1.3" fill="#222"/>
<circle cx="918.5" cy="148.9" r="1.3" fill="#222"/>
<circle cx="939.3" cy="143.7" r="1.3" fill="#222"/>
<circle cx="970" cy="156.5" r="1.3" fill="#222"/>
<circle cx="1000" cy="144.2" r="1.3" fill="#222"/>
<circle cx="1021.3" cy="148.9" r="1.3" fill="#222"/>
<circle cx="1013" cy="177.2" r="1.3" fill="#222"/>
<circle cx="1020" cy="200.9" r="1.3" fill="#222"/>
<circle cx="1026" cy="285.9" r="1.3" fill="#222"/>
<circle cx="970.9" cy="290.2" r="1.3" fill="#222"/>
<circle cx="913.8" cy="285.9" r="1.3" fill="#222"/>
<circle cx="919.7" cy="200.9" r="1.3" fill="#222"/>
<circle cx="926" cy="177.2" r="1.3" fill="#222"/>
<circle cx="1046" cy="200.9" r="1.3" fill="#222"/>
<circle cx="1075.6" cy="201.3" r="1.3" fill="#222"/>
<circle cx="1080.3" cy="285.9" r="1.3" fill="#222"/>
<circle cx="1036.6" cy="286.4" r="1.3" fill="#222"/>
<circle cx="970" cy="242" r="1.3" fill="#222"/>
<g stroke="#7d8aa0" stroke-width="0.8"><line x1="895" y1="244.6" x2="917" y2="244.6"/><line x1="1022" y1="244.6" x2="1042" y2="244.6"/></g>
<path d="M709,324.7 C740,333 770,345 795.2,352.7 C786,375 786,410 795.2,433 C770,440 740,450 710,457.2 C716,448 720.8,434.5 720.8,434.5 C722,420 723,410 722,405.5 C712,385 704,365 703.6,353.8 C703,342 705,333 709,324.7 Z" fill="#a2c6ea" stroke="#a2c6ea" stroke-width="8" stroke-linejoin="round"/>
<path d="M709,324.7 C740,333 770,345 795.2,352.7 C786,375 786,410 795.2,433 C770,440 740,450 710,457.2 C716,448 720.8,434.5 720.8,434.5 C722,420 723,410 722,405.5 C712,385 704,365 703.6,353.8 C703,342 705,333 709,324.7 Z" fill="#765d4c"/>
<path d="M709,324.7 C740,333 770,345 795.2,352.7 C786,375 786,410 795.2,433 C770,440 740,450 710,457.2 C716,448 720.8,434.5 720.8,434.5 C722,420 723,410 722,405.5 C712,385 704,365 703.6,353.8 C703,342 705,333 709,324.7 Z" fill="none" stroke="#3a3e46" stroke-width="0.9" stroke-linejoin="round"/>
<path d="M885.6,324.7 C855,333 825,345 800.5,352.7 C809,375 809,410 800.5,433 C825,440 855,450 885.6,457.2 C880,448 874.8,433.5 874.8,433.5 C873,420 873,410 874.8,405.5 C884,385 891,365 891.4,353.8 C892,342 890,333 885.6,324.7 Z" fill="#a2c6ea" stroke="#a2c6ea" stroke-width="8" stroke-linejoin="round"/>
<path d="M885.6,324.7 C855,333 825,345 800.5,352.7 C809,375 809,410 800.5,433 C825,440 855,450 885.6,457.2 C880,448 874.8,433.5 874.8,433.5 C873,420 873,410 874.8,405.5 C884,385 891,365 891.4,353.8 C892,342 890,333 885.6,324.7 Z" fill="#765d4c"/>
<path d="M885.6,324.7 C855,333 825,345 800.5,352.7 C809,375 809,410 800.5,433 C825,440 855,450 885.6,457.2 C880,448 874.8,433.5 874.8,433.5 C873,420 873,410 874.8,405.5 C884,385 891,365 891.4,353.8 C892,342 890,333 885.6,324.7 Z" fill="none" stroke="#3a3e46" stroke-width="0.9" stroke-linejoin="round"/>
<line x1="790" y1="392.5" x2="805" y2="392.5" stroke="#7d8aa0" stroke-width="0.8"/>
<circle cx="709" cy="324.7" r="1.2" fill="#222"/>
<circle cx="795.2" cy="352.7" r="1.2" fill="#222"/>
<circle cx="795.2" cy="433" r="1.2" fill="#222"/>
<circle cx="710" cy="457.2" r="1.2" fill="#222"/>
<circle cx="720.8" cy="434.5" r="1.2" fill="#222"/>
<circle cx="722" cy="405.5" r="1.2" fill="#222"/>
<circle cx="703.6" cy="353.8" r="1.2" fill="#222"/>
<circle cx="885.6" cy="324.7" r="1.2" fill="#222"/>
<circle cx="800.5" cy="352.7" r="1.2" fill="#222"/>
<circle cx="800.5" cy="433" r="1.2" fill="#222"/>
<circle cx="885.6" cy="457.2" r="1.2" fill="#222"/>
<circle cx="874.8" cy="433.5" r="1.2" fill="#222"/>
<circle cx="874.8" cy="405.5" r="1.2" fill="#222"/>
<circle cx="891.4" cy="353.8" r="1.2" fill="#222"/>
<circle cx="789.8" cy="392.5" r="1.2" fill="#222"/>
<circle cx="804.8" cy="392.5" r="1.2" fill="#222"/><rect x="918" y="370" width="65" height="50" rx="2" fill="#a2c6ea"/>
<path d="M922.6,374 L949.6,374 L949.6,382.1 L936,384.5 L922.6,382.1 Z" fill="#765d4c" stroke="#52c852" stroke-width="1.6"/>
<path d="M952.3,374 L979.4,374 L979.4,382.1 L966,384.5 L952.3,382.1 Z" fill="#765d4c" stroke="#52c852" stroke-width="1.6"/>
<path d="M922.6,390.3 L948.6,390.3 L948.6,416.3 L922.6,416.3 Z" fill="#765d4c" stroke="#52c852" stroke-width="1.6"/>
<path d="M953.2,390.3 L978.5,390.3 L978.5,416.3 L953.2,416.3 Z" fill="#765d4c" stroke="#52c852" stroke-width="1.6"/>
<g stroke="#d9b8a8" stroke-width="1" fill="none"><circle cx="935.6" cy="394" r="3.5"/><circle cx="965.8" cy="394" r="3.5"/></g>
<g stroke="#111" stroke-width="0.9"><line x1="935.6" y1="397" x2="935.6" y2="416"/><line x1="965.8" y1="397" x2="965.8" y2="416"/></g>
<circle cx="936" cy="378.5" r="2.2" fill="#5cf05c"/>
<circle cx="966" cy="378.5" r="2.2" fill="#5cf05c"/>
<circle cx="922.6" cy="374" r="1.5" fill="#111"/>
<circle cx="949.6" cy="374" r="1.5" fill="#111"/>
<circle cx="952.3" cy="374" r="1.5" fill="#111"/>
<circle cx="979.4" cy="374" r="1.5" fill="#111"/>
<circle cx="922.6" cy="416.3" r="1.5" fill="#111"/>
<circle cx="948.6" cy="416.3" r="1.5" fill="#111"/>
<circle cx="953.2" cy="416.3" r="1.5" fill="#111"/>
<circle cx="978.5" cy="416.3" r="1.5" fill="#111"/>
<circle cx="922.6" cy="390.3" r="1.5" fill="#111"/>
<circle cx="948.6" cy="390.3" r="1.5" fill="#111"/>
<circle cx="953.2" cy="390.3" r="1.5" fill="#111"/>
<circle cx="978.5" cy="390.3" r="1.5" fill="#111"/>
<circle cx="922.6" cy="382" r="1.5" fill="#111"/>
<circle cx="949.6" cy="382" r="1.5" fill="#111"/>
<circle cx="952.3" cy="382" r="1.5" fill="#111"/>
<circle cx="979.4" cy="382" r="1.5" fill="#111"/>
<circle cx="936" cy="384.5" r="1.5" fill="#111"/>
<circle cx="966" cy="384.5" r="1.5" fill="#111"/>
<rect x="903" y="428.5" width="45" height="63" rx="2" fill="#a2c6ea"/><rect x="952" y="428.5" width="46" height="63" rx="2" fill="#a2c6ea"/>
<path d="M907.2,432.7 L945.1,432.7 L945.1,444.4 L926,448 L907.2,444.4 Z" fill="#765d4c" stroke="#52c852" stroke-width="1.6"/>
<path d="M956,432.7 L993.9,432.7 L993.9,444.4 L975,448 L956,444.4 Z" fill="#765d4c" stroke="#52c852" stroke-width="1.6"/>
<path d="M909,452.5 L944.2,452.5 L944.2,486.8 L909,486.8 Z" fill="#765d4c" stroke="#52c852" stroke-width="1.6"/>
<path d="M957.8,452.5 L992,452.5 L992,486.8 L957.8,486.8 Z" fill="#765d4c" stroke="#52c852" stroke-width="1.6"/>
<g stroke="#d9b8a8" stroke-width="1" fill="none"><circle cx="926.6" cy="457" r="4.2"/><circle cx="974.9" cy="457" r="4.2"/></g>
<g stroke="#111" stroke-width="0.9"><line x1="926.6" y1="461" x2="926.6" y2="487"/><line x1="974.9" y1="461" x2="974.9" y2="487"/></g>
<g stroke="#7d8aa0" stroke-width="0.8"><line x1="948" y1="470" x2="952" y2="470"/><line x1="948" y1="416" x2="952" y2="416"/></g>
<circle cx="926" cy="440" r="2.3" fill="#5cf05c"/>
<circle cx="975" cy="440" r="2.3" fill="#5cf05c"/>
<circle cx="909" cy="486.8" r="2.2" fill="#111"/>
<circle cx="944.2" cy="486.8" r="2.2" fill="#111"/>
<circle cx="957.8" cy="486.8" r="2.2" fill="#111"/>
<circle cx="992" cy="486.8" r="2.2" fill="#111"/>
<circle cx="926.6" cy="486.8" r="1.5" fill="#111"/>
<circle cx="974.9" cy="486.8" r="1.5" fill="#111"/>
<circle cx="907.2" cy="432.7" r="1.5" fill="#111"/>
<circle cx="945.1" cy="432.7" r="1.5" fill="#111"/>
<circle cx="956" cy="432.7" r="1.5" fill="#111"/>
<circle cx="993.9" cy="432.7" r="1.5" fill="#111"/>
<circle cx="907.2" cy="444.4" r="1.5" fill="#111"/>
<circle cx="945.1" cy="444.4" r="1.5" fill="#111"/>
<circle cx="956" cy="444.4" r="1.5" fill="#111"/>
<circle cx="993.9" cy="444.4" r="1.5" fill="#111"/>
<circle cx="926" cy="448" r="1.5" fill="#111"/>
<circle cx="975" cy="448" r="1.5" fill="#111"/>
<circle cx="909" cy="452.5" r="1.5" fill="#111"/>
<circle cx="944.2" cy="452.5" r="1.5" fill="#111"/>
<circle cx="957.8" cy="452.5" r="1.5" fill="#111"/>
<circle cx="992" cy="452.5" r="1.5" fill="#111"/>
<path fill="#765d4c" d="M708.2,472.2 C740,476 800,477 850.9,472.2 L833.2,496 L722.2,496 Z"/>
<path fill="none" stroke="#c85a5a" stroke-width="1.1" d="M708.2,472.2 C740,476 800,477 850.9,472.2 L833.2,496 M708.2,472.2 L722.2,496"/>
<path fill="none" stroke="#34383e" stroke-width="0.8" d="M722.2,496 L833.2,496"/>
<path fill="none" stroke="#8a9aa8" stroke-width="1" d="M722,492 C760,484 800,484 833,492 M778,477 L778,492"/>
<circle cx="708.2" cy="472.2" r="1.3" fill="#222"/>
<circle cx="850.9" cy="472.2" r="1.3" fill="#222"/>
<circle cx="833.2" cy="496" r="1.3" fill="#222"/>
<circle cx="722.2" cy="496" r="1.3" fill="#222"/>
<circle cx="778" cy="476.5" r="1.3" fill="#222"/>
<circle cx="740" cy="475" r="1.3" fill="#222"/>
<circle cx="815" cy="475" r="1.3" fill="#222"/>
<path d="M724.5,505.8 L745.7,500.3 C750,510 755,518 760.4,522.1 L776.7,522.1 L777.4,660.9 C755,659 735,657 719.6,656 C720,620 720,590 721.2,559.7 C726,545 726,520 724.5,505.8 Z" fill="#765d4c"/>
<path d="M724.5,505.8 L745.7,500.3 C750,510 755,518 760.4,522.1 L776.7,522.1 L777.4,660.9 C755,659 735,657 719.6,656 C720,620 720,590 721.2,559.7 C726,545 726,520 724.5,505.8 Z" fill="none" stroke="#3a3e46" stroke-width="0.9" stroke-linejoin="round"/>
<path d="M785.5,522.1 L801.9,522.1 C807,518 812,510 815.9,500.9 L837.1,505.8 C836,520 836,545 842,559.7 C843,590 843,620 843.7,656 C828,657 808,659 784.9,660.9 Z" fill="#765d4c"/>
<path d="M785.5,522.1 L801.9,522.1 C807,518 812,510 815.9,500.9 L837.1,505.8 C836,520 836,545 842,559.7 C843,590 843,620 843.7,656 C828,657 808,659 784.9,660.9 Z" fill="none" stroke="#3a3e46" stroke-width="0.9" stroke-linejoin="round"/>
<g fill="none" stroke="#6ea0c8" stroke-width="2.2"><path d="M760.4,522.1 L776.7,522.1 L777.4,660"/><path d="M801.9,522.1 L785.5,522.1 L785,660"/></g>
<g fill="none" stroke="#7d9cb0" stroke-width="0.9"><path d="M762,523 L776,580"/><path d="M800,523 L786,580"/></g>
<g fill="none" stroke="#b03a3a" stroke-width="1.1"><rect x="726" y="552.5" width="29" height="29.4"/><rect x="722.2" y="605.4" width="32.7" height="38.6"/><rect x="805.1" y="552.5" width="29.4" height="29.4"/><rect x="805.1" y="605.4" width="33.7" height="38.6"/></g>
<g fill="none" stroke="#d0b0a4" stroke-width="1"><circle cx="770.2" cy="577" r="5"/><circle cx="770.2" cy="595.6" r="5"/><circle cx="770.2" cy="613.6" r="5"/><circle cx="770.2" cy="631.5" r="5"/></g>
<circle cx="792.4" cy="577" r="2.6" fill="#4ef04e"/>
<circle cx="792.4" cy="595.6" r="2.6" fill="#4ef04e"/>
<circle cx="792.4" cy="613.6" r="2.6" fill="#4ef04e"/>
<circle cx="792.4" cy="631.5" r="2.6" fill="#4ef04e"/>
<g fill="none" stroke="#5dc85d" stroke-width="2.6"><path d="M720,654 C740,656 760,658 777,658.5"/><path d="M785,658.5 C805,658 825,656 843.5,654"/></g>
<circle cx="724.5" cy="505.8" r="1.3" fill="#222"/>
<circle cx="745.7" cy="500.3" r="1.3" fill="#222"/>
<circle cx="760.4" cy="522.1" r="1.3" fill="#222"/>
<circle cx="776.7" cy="522.1" r="1.3" fill="#222"/>
<circle cx="777.4" cy="660.9" r="1.3" fill="#222"/>
<circle cx="719.6" cy="656" r="1.3" fill="#222"/>
<circle cx="721.2" cy="559.7" r="1.3" fill="#222"/>
<circle cx="785.5" cy="522.1" r="1.3" fill="#222"/>
<circle cx="801.9" cy="522.1" r="1.3" fill="#222"/>
<circle cx="815.9" cy="500.9" r="1.3" fill="#222"/>
<circle cx="837.1" cy="505.8" r="1.3" fill="#222"/>
<circle cx="842" cy="559.7" r="1.3" fill="#222"/>
<circle cx="843.7" cy="656" r="1.3" fill="#222"/>
<circle cx="784.9" cy="660.9" r="1.3" fill="#222"/>
<rect x="846" y="504.8" width="5.8" height="111" fill="#765d4c" stroke="#333" stroke-width="0.7"/>
<rect x="716.3" y="671.4" width="227.6" height="9.6" fill="#765d4c" stroke="#333" stroke-width="0.7"/>
<rect x="745.7" y="685" width="5" height="15" fill="#765d4c" stroke="#333" stroke-width="0.7"/>
<rect x="766.5" y="685" width="5" height="15" fill="#765d4c" stroke="#333" stroke-width="0.7"/>
<rect x="785" y="685" width="5" height="15" fill="#765d4c" stroke="#333" stroke-width="0.7"/>
<rect x="803.5" y="685" width="5" height="15" fill="#765d4c" stroke="#333" stroke-width="0.7"/>
<path d="M862.2,560 L891.4,559.4 C891,580 893,600 895,615 C897,630 899,645 901.9,656.8 L857.3,657.6 C856,640 857,620 859,605 C860,590 862,575 862.2,560 Z" fill="#a2c6ea" stroke="#a2c6ea" stroke-width="8" stroke-linejoin="round"/>
<path d="M862.2,560 L891.4,559.4 C891,580 893,600 895,615 C897,630 899,645 901.9,656.8 L857.3,657.6 C856,640 857,620 859,605 C860,590 862,575 862.2,560 Z" fill="#765d4c"/>
<path d="M862.2,560 L891.4,559.4 C891,580 893,600 895,615 C897,630 899,645 901.9,656.8 L857.3,657.6 C856,640 857,620 859,605 C860,590 862,575 862.2,560 Z" fill="none" stroke="#3a3e46" stroke-width="0.9" stroke-linejoin="round"/>
<path d="M917.6,506.9 L938.9,501.7 C948,510 958,514 969,514.8 C980,514 990,510 998.7,501.7 L1020.6,506.9 C1016,514 1011.8,526 1011.8,535.2 C1011.8,545 1017,552 1020.6,559.4 C1022,590 1023,630 1025,656.8 C1005,659 990,660 969,660.6 C950,660 930,658 912.7,656.8 C914,630 916,590 918.5,559.4 C922,552 925.8,545 925.8,535.2 C925.8,526 921,514 917.6,506.9 Z" fill="#a2c6ea" stroke="#a2c6ea" stroke-width="8" stroke-linejoin="round"/>
<path d="M917.6,506.9 L938.9,501.7 C948,510 958,514 969,514.8 C980,514 990,510 998.7,501.7 L1020.6,506.9 C1016,514 1011.8,526 1011.8,535.2 C1011.8,545 1017,552 1020.6,559.4 C1022,590 1023,630 1025,656.8 C1005,659 990,660 969,660.6 C950,660 930,658 912.7,656.8 C914,630 916,590 918.5,559.4 C922,552 925.8,545 925.8,535.2 C925.8,526 921,514 917.6,506.9 Z" fill="#765d4c"/>
<path d="M917.6,506.9 L938.9,501.7 C948,510 958,514 969,514.8 C980,514 990,510 998.7,501.7 L1020.6,506.9 C1016,514 1011.8,526 1011.8,535.2 C1011.8,545 1017,552 1020.6,559.4 C1022,590 1023,630 1025,656.8 C1005,659 990,660 969,660.6 C950,660 930,658 912.7,656.8 C914,630 916,590 918.5,559.4 C922,552 925.8,545 925.8,535.2 C925.8,526 921,514 917.6,506.9 Z" fill="none" stroke="#3a3e46" stroke-width="0.9" stroke-linejoin="round"/>
<path d="M1046.8,560 L1075,560 C1076,590 1078,620 1078.9,657.6 L1036.6,657.6 C1038,640 1040,620 1043,605 C1045,590 1046.5,575 1046.8,560 Z" fill="#a2c6ea" stroke="#a2c6ea" stroke-width="8" stroke-linejoin="round"/>
<path d="M1046.8,560 L1075,560 C1076,590 1078,620 1078.9,657.6 L1036.6,657.6 C1038,640 1040,620 1043,605 C1045,590 1046.5,575 1046.8,560 Z" fill="#765d4c"/>
<path d="M1046.8,560 L1075,560 C1076,590 1078,620 1078.9,657.6 L1036.6,657.6 C1038,640 1040,620 1043,605 C1045,590 1046.5,575 1046.8,560 Z" fill="none" stroke="#3a3e46" stroke-width="0.9" stroke-linejoin="round"/>
<line x1="969" y1="514.8" x2="969" y2="660.6" stroke="#c9d8e8" stroke-width="2.2"/>
<g fill="none" stroke="#5dc85d" stroke-width="2.6"><path d="M859,652 C870,652 885,652 900,651.5"/><path d="M914,651 C935,652 952,654 967,655"/><path d="M971,655 C990,654 1005,652 1024,651"/><path d="M1038,652 C1050,652 1065,652 1078,652"/></g>
<g stroke="#c03838" stroke-width="1" fill="none">
<path d="M861,594 L861,612 M865,594 L865,612 M860,595 L866,595 M860,611 L866,611"/>
<path d="M937.5,593.5 L937.5,609.5 M941.5,593.5 L941.5,609.5 M936.5,594 L942.5,594 M936.5,609 L942.5,609"/>
<path d="M997.5,593.5 L997.5,609.5 M1001.5,593.5 L1001.5,609.5 M996.5,594 L1002.5,594 M996.5,609 L1002.5,609"/>
<path d="M1070,594 L1070,612 M1074,594 L1074,612 M1069,595 L1075,595 M1069,611 L1075,611"/>
</g>
<g stroke="#7d8aa0" stroke-width="0.8"><line x1="896" y1="608" x2="916" y2="608"/><line x1="1023" y1="608" x2="1041" y2="608"/></g>
<circle cx="862.2" cy="560" r="1.3" fill="#222"/>
<circle cx="891.4" cy="559.4" r="1.3" fill="#222"/>
<circle cx="901.9" cy="656.8" r="1.3" fill="#222"/>
<circle cx="857.3" cy="657.6" r="1.3" fill="#222"/>
<circle cx="917.6" cy="506.9" r="1.3" fill="#222"/>
<circle cx="938.9" cy="501.7" r="1.3" fill="#222"/>
<circle cx="969" cy="514.8" r="1.3" fill="#222"/>
<circle cx="998.7" cy="501.7" r="1.3" fill="#222"/>
<circle cx="1020.6" cy="506.9" r="1.3" fill="#222"/>
<circle cx="1011.8" cy="535.2" r="1.3" fill="#222"/>
<circle cx="1020.6" cy="559.4" r="1.3" fill="#222"/>
<circle cx="1025" cy="656.8" r="1.3" fill="#222"/>
<circle cx="969" cy="660.6" r="1.3" fill="#222"/>
<circle cx="912.7" cy="656.8" r="1.3" fill="#222"/>
<circle cx="918.5" cy="559.4" r="1.3" fill="#222"/>
<circle cx="925.8" cy="535.2" r="1.3" fill="#222"/>
<circle cx="1046.8" cy="560" r="1.3" fill="#222"/>
<circle cx="1075" cy="560" r="1.3" fill="#222"/>
<circle cx="1078.9" cy="657.6" r="1.3" fill="#222"/>
<circle cx="1036.6" cy="657.6" r="1.3" fill="#222"/>
</svg>
</div>
<div class="abs" style="left:573px;top:643px;color:#fff;font-size:22px;letter-spacing:1.9px;font-weight:bold;line-height:26px">CLOTHING</div>
<div id="div" class="abs"></div>
<div id="rp" class="abs"><div class="abs" style="left:0;top:0;width:5px;height:720px;background:#1a1a1a"></div>
<div class="abs" style="left:5px;top:0;width:2px;height:720px;background:#0e0e0e"></div>
<div class="abs" style="left:7px;top:0;width:76px;height:720px;background:#222"></div>
<div class="abs" style="left:7px;top:0;width:76px;height:17px;background:#1c1c1c"></div>
<div class="abs" style="left:8px;top:1px;width:37px;height:16px;background:#2a2a2a"></div>
<div class="abs" style="left:13px;top:2px;font-size:9.5px;color:#e6e6e6;line-height:12px;transform:scaleX(0.86);transform-origin:0 0">Scene</div>
<div class="abs" style="left:51px;top:2px;font-size:9.5px;color:#4c4c4c;line-height:12px;transform:scaleX(0.86);transform-origin:0 0">Fabric</div>
<div class="abs" style="left:7px;top:17px;width:76px;height:24px;background:#232323"></div>
<div class="abs" style="left:14px;top:23px;font-size:8.5px;color:#9a9a9a;line-height:10px;letter-spacing:-0.3px">sme</div>
<div class="abs" style="left:10px;top:40px;width:73px;height:256px;background:#1f1f1f"></div>
<div class="abs" style="left:13px;top:244px;width:70px;height:8px;background:#2e2e33"></div>
<div class="abs tree" style="left:0;top:0;">
<div class="abs tr" style="left:31px;top:42.0px">SeamLinePairG</div>
<div class="abs tr" style="left:31px;top:51.8px">SeamLinePairG</div>
<div class="abs tr" style="left:31px;top:61.6px">SeamLinePairG</div>
<div class="abs tr" style="left:31px;top:71.4px">SeamLinePairG</div>
<div class="abs tr" style="left:31px;top:81.2px">SeamLinePairG</div>
<div class="abs tr" style="left:31px;top:91.0px">SeamLinePairG</div>
<div class="abs tr" style="left:31px;top:100.8px">SeamLinePairG</div>
<div class="abs tr" style="left:31px;top:110.6px">SeamLinePairG</div>
<div class="abs tr" style="left:31px;top:120.4px">SeamLinePairG</div>
<div class="abs tr" style="left:31px;top:130.2px">SeamLinePairG</div>
<div class="abs tr" style="left:31px;top:140.0px">SeamLinePairG</div>
<div class="abs tr" style="left:31px;top:149.8px">SeamLinePairG</div>
<div class="abs tr" style="left:31px;top:159.6px">SeamLinePairG</div>
<div class="abs tr" style="left:31px;top:169.4px">SeamLinePairG</div>
<div class="abs tr" style="left:31px;top:179.2px">SeamLinePairG</div>
<div class="abs tr" style="left:16px;top:191.0px;color:#a8a8a8;font-weight:normal">2D Sketch Design</div>
<div class="abs tr" style="left:16px;top:200.5px;color:#a8a8a8;font-weight:normal">3D Simulation</div>
<div class="abs tr" style="left:31px;top:210.0px;color:#a8a8a8;font-weight:normal">Avatar</div>
<div class="abs" style="left:17px;top:211.5px;width:7px;height:7px;border:1px solid #555"></div>
<div class="abs tr" style="left:46px;top:220.0px;color:#a8a8a8;font-weight:normal">Body70_c</div>
<div class="abs" style="left:32px;top:221.5px;width:7px;height:7px;border:1px solid #555"></div>
<div class="abs tr" style="left:61px;top:230.0px;color:#a8a8a8;font-weight:normal">Obj_A</div>
<div class="abs" style="left:47px;top:231.5px;width:7px;height:7px;border:1px solid #555"></div>
<div class="abs tr" style="left:76px;top:240.0px;color:#f0f0f0;font-weight:bold">M</div>
<div class="abs tr" style="left:61px;top:249.5px;color:#a8a8a8;font-weight:normal">Obj_A</div>
<div class="abs tr" style="left:31px;top:259.0px;color:#a8a8a8;font-weight:normal">Cloth Controlle</div>
<div class="abs" style="left:17px;top:260.5px;width:7px;height:7px;border:1px solid #555"></div>
<div class="abs tr" style="left:31px;top:269.0px;color:#a8a8a8;font-weight:normal">Default Camer</div>
<div class="abs tr" style="left:31px;top:279.0px;color:#a8a8a8;font-weight:normal">Light</div>
<div class="abs tr" style="left:31px;top:288.5px;color:#a8a8a8;font-weight:normal">Light</div>
</div>
<div class="abs" style="left:7px;top:296px;width:76px;height:11px;background:#262626"></div>
<div class="abs" style="left:26px;top:297px;width:24px;height:9px;background:#202028"></div>
<div class="abs" style="left:7px;top:308px;width:76px;height:2px;background:#111"></div>
<div class="abs" style="left:7px;top:310px;width:76px;height:21px;background:#232323"></div>
<div class="abs" style="left:27px;top:312px;width:56px;height:18px;background:#1e1e1e"></div>
<svg class="abs" style="left:5px;top:315px" width="14" height="12"><path d="M2,4 L7,4 L7,1 L12,6 L7,11 L7,8 L2,8 Z" fill="#cfcfcf"/></svg>
<div class="abs" style="left:7px;top:331px;width:76px;height:1px;background:#151515"></div>
<div class="abs" style="left:7px;top:332px;width:76px;height:388px;background:#262626"></div>
</div>

</body></html>
